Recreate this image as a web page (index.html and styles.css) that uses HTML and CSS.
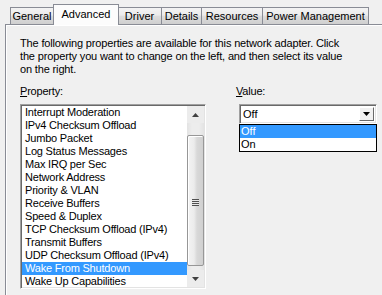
FILE: index.html
```html
<!DOCTYPE html>
<html>
<head>
<meta charset="utf-8">
<link rel="stylesheet" href="styles.css">
</head>
<body>
<div class="dialog">
  <div class="tabs">
    <div class="tab t-general">General</div>
    <div class="tab active t-advanced">Advanced</div>
    <div class="tab t-driver">Driver</div>
    <div class="tab t-details">Details</div>
    <div class="tab t-resources">Resources</div>
    <div class="tab t-power">Power Management</div>
  </div>
  <div class="panel">
    <p class="desc">The following properties are available for this network adapter. Click the property you want to change on the left, and then select its value on the right.</p>
    <div class="cols">
      <div class="col-left">
        <div class="label"><u>P</u>roperty:</div>
        <div class="listbox">
          <ul class="items">
            <li>Interrupt Moderation</li>
            <li>IPv4 Checksum Offload</li>
            <li>Jumbo Packet</li>
            <li>Log Status Messages</li>
            <li>Max IRQ per Sec</li>
            <li>Network Address</li>
            <li>Priority &amp; VLAN</li>
            <li>Receive Buffers</li>
            <li>Speed &amp; Duplex</li>
            <li>TCP Checksum Offload (IPv4)</li>
            <li>Transmit Buffers</li>
            <li>UDP Checksum Offload (IPv4)</li>
            <li class="sel">Wake From Shutdown</li>
            <li>Wake Up Capabilities</li>
          </ul>
          <div class="scrollbar">
            <div class="sb-btn"><svg width="7" height="4" viewBox="0 0 7 4"><path d="M3.5 0 L7 4 L0 4 Z" fill="#404040"/></svg></div>
            <div class="sb-track">
              <div class="sb-thumb"><span class="grip"></span></div>
            </div>
            <div class="sb-btn"><svg width="7" height="4" viewBox="0 0 7 4"><path d="M0 0 L7 0 L3.5 4 Z" fill="#404040"/></svg></div>
          </div>
        </div>
      </div>
      <div class="col-right">
        <div class="label"><u>V</u>alue:</div>
        <div class="combo-wrap">
          <div class="combo">
            <span class="combo-text">Off</span>
            <span class="combo-btn"><svg width="7" height="4" viewBox="0 0 7 4"><path d="M0 0 L7 0 L3.5 4 Z" fill="#000"/></svg></span>
          </div>
          <ul class="dropdown">
            <li class="sel">Off</li>
            <li>On</li>
          </ul>
        </div>
      </div>
    </div>
  </div>
</div>
</body>
</html>
```

FILE: styles.css
```css
html, body {
  margin: 0;
  padding: 0;
}
body {
  background: #f0f0f0;
  font-family: "Liberation Sans", Arial, sans-serif;
  font-size: 11px;
  color: #000;
  overflow: hidden;
  width: 382px;
  height: 295px;
}
.dialog {
  padding-top: 3px;
}
.tabs {
  display: flex;
  align-items: flex-end;
  padding-left: 10px;
  height: 21px;
  position: relative;
  z-index: 2;
}
.tab {
  box-sizing: border-box;
  height: 17px;
  border: 1px solid #898c95;
  border-bottom: none;
  border-left: none;
  background: linear-gradient(#f3f3f3, #ebebeb 45%, #dddddd 50%, #cfcfcf);
  text-align: center;
  line-height: 16px;
  white-space: nowrap;
}
.tab.t-general { border-left: 1px solid #898c95; width: 44px; }
.tab.t-driver { width: 44px; border-left: none; }
.tab.t-details { width: 40px; }
.tab.t-resources { width: 61px; }
.tab.t-power { width: 106px; }
.tab.active {
  width: 66px;
  height: 21px;
  margin: 0 -1px -1px -1px;
  border-left: 1px solid #898c95;
  border-right: 1px solid #898c95;
  background: #fcfcfc;
  line-height: 18px;
  position: relative;
  z-index: 3;
}
.panel {
  margin-left: 5px;
  width: 377px;
  height: 271px;
  border-top: 1px solid #898c95;
  border-left: 1px solid #898c95;
  background: #f0f0f0;
  box-shadow: inset 1px 1px 0 #ffffff;
  padding: 12px 0 0 14px;
  box-sizing: border-box;
}
.desc {
  margin: 0;
  width: 334px;
  line-height: 13px;
  letter-spacing: -0.15px;
}
.cols {
  display: flex;
  margin-top: 9px;
}
.col-left {
  width: 186px;
}
.col-right {
  margin-left: 30px;
}
.label {
  line-height: 13px;
  height: 13px;
  letter-spacing: -0.2px;
}
.label u {
  text-decoration-thickness: 1px;
  text-underline-offset: 1px;
}
.listbox {
  margin-top: 6px;
  width: 186px;
  height: 185px;
  box-sizing: border-box;
  border: 1px solid;
  border-color: #a0a0a0 #ffffff #ffffff #a0a0a0;
  box-shadow: inset 1px 1px 0 #696969, inset -1px -1px 0 #e3e3e3;
  background: #fff;
  display: flex;
  padding: 1px;
}
.items {
  list-style: none;
  margin: 0;
  padding: 0;
  flex: 1;
  min-width: 0;
}
.items li {
  height: 13px;
  line-height: 13px;
  padding-left: 3px;
  white-space: nowrap;
  letter-spacing: -0.2px;
}
.items li.sel,
.dropdown li.sel {
  background: #3399ff;
  color: #fff;
}
.scrollbar {
  width: 17px;
  display: flex;
  flex-direction: column;
  background: #eaeaea;
}
.sb-btn {
  height: 17px;
  display: flex;
  align-items: center;
  justify-content: center;
  background: #ececec;
}
.sb-track {
  flex: 1;
  padding: 12px 0 4px 0;
  display: flex;
  background: linear-gradient(90deg, #e3e3e3, #ededed 30%, #ededed 70%, #e3e3e3);
}
.sb-thumb {
  flex: 1;
  box-sizing: border-box;
  border: 1px solid #979797;
  border-radius: 2px;
  background: linear-gradient(90deg, #f3f3f3, #ececec 40%, #d8d8d8 60%, #d0d0d0);
  box-shadow: inset 1px 1px 0 #ffffff;
  position: relative;
}
.grip {
  position: absolute;
  left: 4px;
  top: 63px;
  width: 7px;
  height: 7px;
  background: repeating-linear-gradient(#505050 0 1px, #e8e8e8 1px 2px);
}
.combo-wrap {
  margin-top: 6px;
  margin-left: 3px;
  width: 138px;
}
.combo {
  box-sizing: border-box;
  height: 20px;
  border: 1px solid;
  border-color: #a0a0a0 #ffffff #ffffff #a0a0a0;
  box-shadow: inset 1px 1px 0 #696969, inset -1px -1px 0 #e3e3e3;
  background: #fff;
  display: flex;
  align-items: center;
  padding: 2px;
}
.combo-text {
  flex: 1;
  padding-left: 1px;
  line-height: 13px;
}
.combo-btn {
  width: 15px;
  height: 14px;
  box-sizing: border-box;
  border: 1px solid;
  border-color: #ffffff #696969 #696969 #ffffff;
  background: #f0f0f0;
  display: flex;
  align-items: center;
  justify-content: center;
}
.dropdown {
  list-style: none;
  margin: 0;
  padding: 0;
  border: 1px solid #000;
  background: #fff;
}
.dropdown li {
  height: 13px;
  line-height: 13px;
  padding-left: 1px;
}
```
